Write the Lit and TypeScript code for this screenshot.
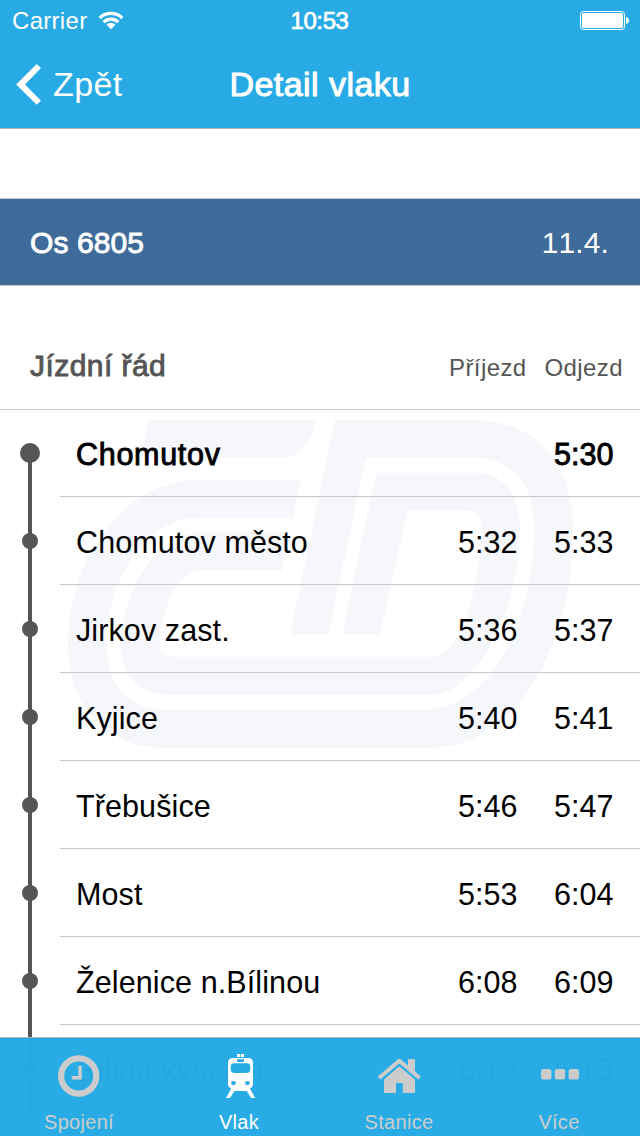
import { LitElement, html, css, svg } from "lit";
import { customElement, property } from "lit/decorators.js";
import { classMap } from "lit/directives/class-map.js";

interface Stop {
  name: string;
  arrival: string;
  departure: string;
}

const STOPS: Stop[] = [
  { name: "Chomutov", arrival: "", departure: "5:30" },
  { name: "Chomutov město", arrival: "5:32", departure: "5:33" },
  { name: "Jirkov zast.", arrival: "5:36", departure: "5:37" },
  { name: "Kyjice", arrival: "5:40", departure: "5:41" },
  { name: "Třebušice", arrival: "5:46", departure: "5:47" },
  { name: "Most", arrival: "5:53", departure: "6:04" },
  { name: "Želenice n.Bílinou", arrival: "6:08", departure: "6:09" },
  { name: "Bílina kyselka", arrival: "6:12", departure: "6:13" },
];

const clockIcon = svg`
  <svg width="50" height="46" viewBox="54 1053 50 46">
    <circle cx="78.7" cy="1076" r="17.6" fill="none" stroke="currentColor" stroke-width="6.2"/>
    <path d="M78.3 1065.7H81.8V1079.4H71.7V1076H78.3Z" fill="currentColor"/>
  </svg>`;

const trainIcon = svg`
  <svg width="50" height="46" viewBox="214 1053 50 46">
    <path fill="currentColor" fill-rule="evenodd" d="M233 1058H248.5Q253 1058 253 1062.5V1084Q253 1087 250 1088.8L255.2 1098H251.2L246.8 1091H234.5L230 1098H226L231.2 1088.8Q228 1087 228 1084V1062.5Q228 1058 233 1058Z
      M237 1059.2V1062H244V1059.2Z
      M234 1063.2Q230.7 1063.2 230.7 1066.5V1069.5Q230.7 1073 235 1073H246Q250.3 1073 250.3 1069.5V1066.5Q250.3 1063.2 247 1063.2Z
      M233.5 1081A2.4 2.1 0 1 0 233.5 1085.2A2.4 2.1 0 1 0 233.5 1081Z
      M247.4 1081A2.4 2.1 0 1 0 247.4 1085.2A2.4 2.1 0 1 0 247.4 1081Z"/>
    <path fill="currentColor" d="M237 1054H240.2V1057H237ZM241 1054H244V1057H241Z"/>
  </svg>`;

const homeIcon = svg`
  <svg width="50" height="46" viewBox="374 1053 50 46">
    <g fill="currentColor">
      <path d="M398 1059.2Q399.3 1058.2 400.6 1059.2L408 1065.6V1060Q408 1059 409 1059H414Q415 1059 415 1060V1071.6L420.9 1076.6L418.4 1079.4L399.3 1063.4L380.3 1079.4L377.8 1076.6Z"/>
      <path d="M399.3 1066.2L415 1079.4V1092Q415 1093 414 1093H402.8V1083H396V1093H385Q384 1093 384 1092V1079.4Z"/>
    </g>
  </svg>`;

const moreIcon = svg`
  <svg width="50" height="46" viewBox="534 1053 50 46">
    <g fill="currentColor">
      <rect x="541" y="1069" width="10.4" height="10.6" rx="2.6"/>
      <rect x="554.8" y="1069" width="10.4" height="10.6" rx="2.6"/>
      <rect x="568.6" y="1069" width="10.4" height="10.6" rx="2.6"/>
    </g>
  </svg>`;

@customElement("status-bar")
class StatusBar extends LitElement {
  static styles = css`
    :host {
      display: grid;
      grid-template-columns: 1fr auto 1fr;
      align-items: center;
      height: 40px;
      padding: 2px 11px 0 12px;
      box-sizing: border-box;
      font-size: 24px;
      line-height: 38px;
      letter-spacing: 0.3px;
    }
    .carrier {
      display: flex;
      align-items: center;
      gap: 11px;
    }
    .clock {
      -webkit-text-stroke: 0.7px currentColor;
      letter-spacing: -0.4px;
      padding-right: 2px;
    }
    .battery {
      justify-self: end;
      display: block;
    }
    .wifi {
      display: block;
    }
  `;
  render() {
    return html`
      <div class="carrier">
        <span>Carrier</span>
        <svg class="wifi" width="26" height="20" viewBox="97.5 11 26 20">
          <g fill="none" stroke="#fff" stroke-width="3.3">
            <path d="M99.2 18A16.3 16.3 0 0 1 121.8 18"/>
            <path d="M103.1 22.1A10.6 10.6 0 0 1 117.9 22.1"/>
          </g>
          <path fill="#fff" d="M106 24.6A6.6 6.6 0 0 1 115 24.6L110.5 29.2Z"/>
        </svg>
      </div>
      <span class="clock">10:53</span>
      <svg class="battery" width="49" height="20" viewBox="580 11 49 20">
        <rect x="580.5" y="11.5" width="44" height="18" rx="2.8" fill="none" stroke="#fff"/>
        <rect x="582" y="13" width="41" height="15" rx="1.4" fill="#fff"/>
        <path d="M626 17Q629 17.6 629 20.5T626 24Z" fill="#fff"/>
      </svg>
    `;
  }
}

@customElement("nav-header")
class NavHeader extends LitElement {
  static styles = css`
    :host {
      display: grid;
      grid-template-columns: 1fr auto 1fr;
      align-items: center;
      height: 88px;
      font-size: 34px;
      line-height: 88px;
    }
    .back {
      display: flex;
      align-items: center;
      gap: 11px;
      padding-left: 16px;
      letter-spacing: 0.4px;
    }
    .title {
      -webkit-text-stroke: 1px currentColor;
      letter-spacing: 0.45px;
    }
    .chevron {
      display: block;
    }
  `;
  render() {
    return html`
      <div class="back">
        <svg class="chevron" width="26" height="42" viewBox="16 63 26 42">
          <path fill="#fff" d="M36.7 64.1L16.2 84.4L36.7 104.7L41 100.7L25 84.4L41 68.1Z"/>
        </svg>
        <span>Zpět</span>
      </div>
      <span class="title">Detail vlaku</span>
    `;
  }
}

@customElement("stop-row")
class StopRow extends LitElement {
  @property({ attribute: false }) stop!: Stop;
  @property({ type: Boolean }) origin = false;

  static styles = css`
    :host {
      display: block;
    }
    .row {
      display: flex;
      height: 88px;
      font-size: 30.5px;
      color: #000;
    }
    .row.origin {
      height: 87px;
      -webkit-text-stroke: 0.9px currentColor;
    }
    .rail {
      width: 60px;
      display: flex;
      align-items: center;
      justify-content: center;
      background: linear-gradient(#555, #555) center / 4px 100% no-repeat;
    }
    .origin .rail {
      box-sizing: border-box;
      padding-bottom: 1px;
      background: linear-gradient(#555, #555) center bottom / 4px 50% no-repeat;
    }
    .dot {
      width: 16px;
      height: 16px;
      border-radius: 50%;
      background: #555;
    }
    .origin .dot {
      width: 20px;
      height: 20px;
    }
    .body {
      flex: 1;
      display: grid;
      grid-template-columns: 1fr 96px 86px;
      align-items: center;
      padding: 4px 0 0 16px;
      border-bottom: 1px solid #c8c7cc;
    }
    .origin .body {
      padding-top: 2px;
    }
    .name {
      letter-spacing: 0.1px;
      white-space: nowrap;
    }
    .origin .name {
      letter-spacing: 0.7px;
    }
  `;
  render() {
    return html`
      <div class=${classMap({ row: true, origin: this.origin })}>
        <div class="rail"><div class="dot"></div></div>
        <div class="body">
          <span class="name">${this.stop.name}</span>
          <span>${this.stop.arrival}</span>
          <span>${this.stop.departure}</span>
        </div>
      </div>
    `;
  }
}

@customElement("tab-bar")
class TabBar extends LitElement {
  static styles = css`
    :host {
      display: grid;
      grid-template-columns: repeat(4, 1fr);
      border-top: 1px solid #a9b4ba;
      background: rgba(38, 171, 229, 0.984);
      background-clip: padding-box;
      color: #ccc;
      font-size: 20px;
      line-height: 24px;
      letter-spacing: 0.3px;
    }
    .tab {
      display: flex;
      flex-direction: column;
      align-items: center;
      gap: 11px;
      padding: 15px 2px 0 0;
    }
    .tab.active {
      color: #fff;
    }
    .tab svg {
      display: block;
    }
  `;
  render() {
    const tabs = [
      { label: "Spojení", icon: clockIcon, active: false },
      { label: "Vlak", icon: trainIcon, active: true },
      { label: "Stanice", icon: homeIcon, active: false },
      { label: "Více", icon: moreIcon, active: false },
    ];
    return tabs.map(
      (t) => html`
        <div class=${classMap({ tab: true, active: t.active })}>
          ${t.icon}
          <span>${t.label}</span>
        </div>
      `
    );
  }
}

@customElement("app-root")
class AppRoot extends LitElement {
  static styles = css`
    :host {
      display: block;
      position: relative;
      width: 640px;
      height: 1136px;
      overflow: hidden;
      background: #fff;
      font-family: "Liberation Sans", Arial, sans-serif;
      font-kerning: none;
    }
    .top {
      background: #28abe5;
      color: #fff;
      border-bottom: 1px solid #b0b0b3;
    }
    .train {
      display: flex;
      justify-content: space-between;
      align-items: center;
      height: 84px;
      margin-top: 69px;
      padding: 2px 31px 0 30px;
      border-top: 1px solid #c8c7cc;
      border-bottom: 1px solid #c8c7cc;
      background: #3f6b9b;
      background-clip: padding-box;
      color: #fff;
      font-size: 30px;
      line-height: 84px;
    }
    .number {
      -webkit-text-stroke: 0.9px currentColor;
      letter-spacing: 0.1px;
    }
    .date {
      letter-spacing: 0.1px;
    }
    .heading {
      display: flex;
      align-items: baseline;
      height: 55px;
      padding: 68px 17px 0 30px;
      border-bottom: 1px solid #c8c7cc;
      color: #555;
      font-size: 24px;
      letter-spacing: 0.4px;
    }
    .label {
      flex: 1;
      font-size: 30px;
      line-height: 24px;
      letter-spacing: 0.45px;
      -webkit-text-stroke: 0.9px currentColor;
    }
    .departure {
      margin-left: 18px;
    }
    .list {
      position: relative;
    }
    .watermark {
      position: absolute;
      left: 60px;
      top: 0;
    }
    .stops {
      position: relative;
    }
    .tabs {
      position: absolute;
      left: 0;
      right: 0;
      bottom: 0;
      height: 98px;
    }
  `;
  render() {
    return html`
      <div class="top">
        <status-bar></status-bar>
        <nav-header></nav-header>
      </div>
      <div class="train">
        <span class="number">Os 6805</span>
        <span class="date">11.4.</span>
      </div>
      <div class="heading">
        <span class="label">Jízdní řád</span>
        <span>Příjezd</span>
        <span class="departure">Odjezd</span>
      </div>
      <div class="list">
        <svg class="watermark" width="520" height="350" viewBox="60 410 520 350">
          <g fill="#f5f7fb">
            <path d="M148.5 420H316C312 440 301 458 282 458H140.3Z"/>
            <path d="M300.5 480H198C120 480 68 565 68 645C68 705 105 748 165 748H430C520 748 573 640 573 530C573 465 540 420 470 420H335L290 635H328.3L365.7 458H470C515 458 534.5 485 534.5 530C534.5 620 490 709.5 425 709.5H165C128 709.5 106.5 683 106.5 645C106.5 575 150 517.7 198 517.7H293Z"/>
            <path d="M289.5 532.3H200C160 532.3 121 590 121 645C121 678 142 695 170 695H430C480 695 519.7 600 519.7 530C519.7 495 505 472.7 475 472.7H376.3L342 635H380L407.5 510.7H468C478 510.7 481.3 516 481.3 530C481.3 570 466 656.7 432 656.7H175C163 656.7 160 651 160 643C160 618 175 571 198 571H281.5Z"/>
          </g>
        </svg>
        <div class="stops">
          ${STOPS.map((s, i) => html`<stop-row .stop=${s} ?origin=${i === 0}></stop-row>`)}
        </div>
      </div>
      <tab-bar class="tabs"></tab-bar>
    `;
  }
}
